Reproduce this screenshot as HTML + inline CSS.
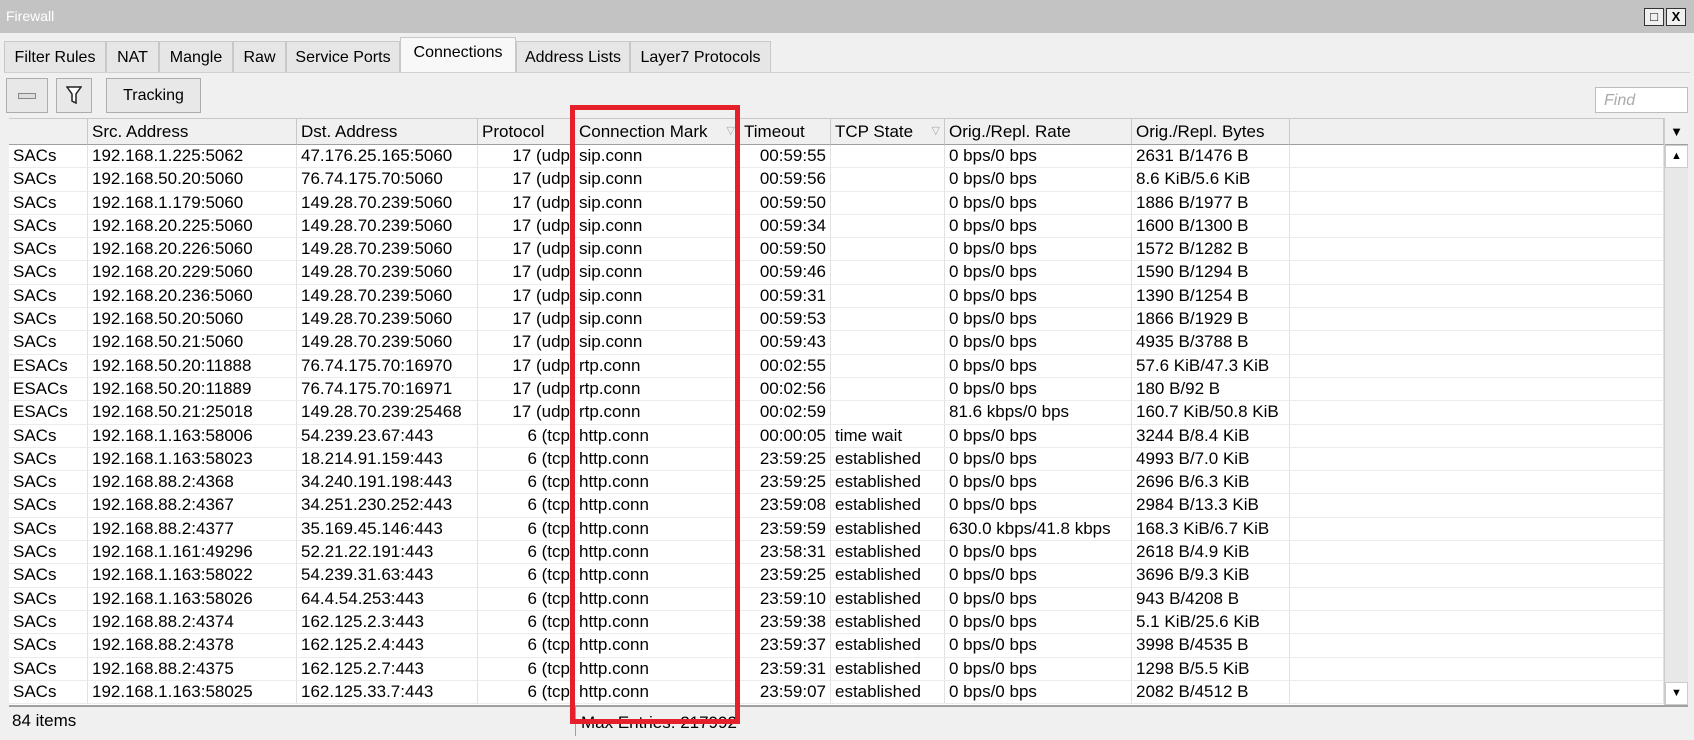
<!DOCTYPE html>
<html><head><meta charset="utf-8"><style>
*{box-sizing:border-box;margin:0;padding:0}
body{width:1694px;height:740px;background:#f0f0f0;font-family:"Liberation Sans",Arial,sans-serif;font-size:15px;color:#000;position:relative;overflow:hidden}
.title{position:absolute;left:0;top:0;width:1694px;height:33px;background:#c3c3c3;color:#fff;font-size:14px;padding:8px 6px}
.wb{position:absolute;top:8px;width:20px;height:18px;border:1px solid #333;background:#f0f0f0;font-size:13px;font-weight:bold;text-align:center;line-height:15px}
.tab{position:absolute;top:41px;height:32px;border:1px solid #c8c8c8;background:#e6e6e6;padding-top:7px;text-align:center;font-size:16px}
.tab.act{top:37px;height:36px;background:#f8f8f8;border-bottom:none;padding-top:6px}
.btn{position:absolute;top:78px;height:35px;border:1px solid #adadad;background:#e8e8e8;text-align:center;padding-top:8px;font-size:16px}
.find{position:absolute;left:1595px;top:87px;width:93px;height:26px;border:1px solid #bdbdbd;background:#fff;color:#aaa;font-style:italic;padding:4px 8px;font-size:16px}
.tbl{position:absolute;left:9px;top:118px;width:1655px;height:587px;overflow:hidden;background:#fff}
.row{display:flex;height:23.3px;overflow:hidden}
.row>div{flex:none;height:100%;border-right:1px solid #e2e2e2;border-bottom:1px solid #ececec;padding:0 4px;white-space:nowrap;overflow:hidden;font-size:17px;line-height:22px}
.row>div:nth-child(1){width:79px}.row>div:nth-child(2){width:209px}.row>div:nth-child(3){width:181px}.row>div:nth-child(4){width:97px;text-align:right}.row>div:nth-child(5){width:165px}.row>div:nth-child(6){width:91px;text-align:right}.row>div:nth-child(7){width:114px}.row>div:nth-child(8){width:187px}.row>div:nth-child(9){width:158px}.row>div:nth-child(10){width:374px}
.row.h{height:27px}
.row.h>div{background:#f0f0f0;border-right:1px solid #c8c8c8;border-bottom:1px solid #a0a0a0;border-top:1px solid #c8c8c8;line-height:25px;text-align:left}
.sb{position:absolute;left:1664px;top:118px;width:24px;height:587px;background:#e8e8e8;border-left:1px solid #ccc}
.status{position:absolute;left:9px;top:705px;width:1679px;height:29px;border-top:2px solid #a0a0a0;background:#f0f0f0;font-size:17px}
.red{position:absolute;left:570px;top:105px;width:170px;height:619px;border:5px solid #e5202a}
</style></head><body>
<div class="title">Firewall</div>
<div class="wb" style="left:1644px">&#9633;</div><div class="wb" style="left:1666px">X</div>
<div class="tab" style="left:4px;width:102px">Filter Rules</div>
<div class="tab" style="left:106px;width:53px">NAT</div>
<div class="tab" style="left:159px;width:74px">Mangle</div>
<div class="tab" style="left:233px;width:53px">Raw</div>
<div class="tab" style="left:286px;width:114px">Service Ports</div>
<div class="tab act" style="left:400px;width:116px">Connections</div>
<div class="tab" style="left:516px;width:114px">Address Lists</div>
<div class="tab" style="left:630px;width:141px">Layer7 Protocols</div>
<div style="position:absolute;left:4px;top:72px;width:1686px;height:1px;background:#d0d0d0"></div>
<div class="btn" style="left:6px;width:42px"><div style="width:18px;height:6px;border:1px solid #888;margin:6px auto 0;background:#ddd"></div></div>
<div class="btn" style="left:56px;width:36px;padding-top:6px"><svg width="16" height="20" viewBox="0 0 16 20"><path d="M1 2H15L10 9V18L6 16V9Z" fill="#fff" stroke="#222" stroke-width="1.5"/></svg></div>
<div class="btn" style="left:106px;width:95px">Tracking</div>
<div class="find">Find</div>
<div class="tbl">
<div class="row h"><div></div><div>Src. Address</div><div>Dst. Address</div><div>Protocol</div><div>Connection Mark <span style="float:right;color:#aaa;font-size:11px">&#9661;</span></div><div>Timeout</div><div>TCP State <span style="float:right;color:#aaa;font-size:11px">&#9661;</span></div><div>Orig./Repl. Rate</div><div>Orig./Repl. Bytes</div><div></div></div>
<div class="row"><div>SACs</div><div>192.168.1.225:5062</div><div>47.176.25.165:5060</div><div>17 (udp</div><div>sip.conn</div><div>00:59:55</div><div></div><div>0 bps/0 bps</div><div>2631 B/1476 B</div><div></div></div>
<div class="row"><div>SACs</div><div>192.168.50.20:5060</div><div>76.74.175.70:5060</div><div>17 (udp</div><div>sip.conn</div><div>00:59:56</div><div></div><div>0 bps/0 bps</div><div>8.6 KiB/5.6 KiB</div><div></div></div>
<div class="row"><div>SACs</div><div>192.168.1.179:5060</div><div>149.28.70.239:5060</div><div>17 (udp</div><div>sip.conn</div><div>00:59:50</div><div></div><div>0 bps/0 bps</div><div>1886 B/1977 B</div><div></div></div>
<div class="row"><div>SACs</div><div>192.168.20.225:5060</div><div>149.28.70.239:5060</div><div>17 (udp</div><div>sip.conn</div><div>00:59:34</div><div></div><div>0 bps/0 bps</div><div>1600 B/1300 B</div><div></div></div>
<div class="row"><div>SACs</div><div>192.168.20.226:5060</div><div>149.28.70.239:5060</div><div>17 (udp</div><div>sip.conn</div><div>00:59:50</div><div></div><div>0 bps/0 bps</div><div>1572 B/1282 B</div><div></div></div>
<div class="row"><div>SACs</div><div>192.168.20.229:5060</div><div>149.28.70.239:5060</div><div>17 (udp</div><div>sip.conn</div><div>00:59:46</div><div></div><div>0 bps/0 bps</div><div>1590 B/1294 B</div><div></div></div>
<div class="row"><div>SACs</div><div>192.168.20.236:5060</div><div>149.28.70.239:5060</div><div>17 (udp</div><div>sip.conn</div><div>00:59:31</div><div></div><div>0 bps/0 bps</div><div>1390 B/1254 B</div><div></div></div>
<div class="row"><div>SACs</div><div>192.168.50.20:5060</div><div>149.28.70.239:5060</div><div>17 (udp</div><div>sip.conn</div><div>00:59:53</div><div></div><div>0 bps/0 bps</div><div>1866 B/1929 B</div><div></div></div>
<div class="row"><div>SACs</div><div>192.168.50.21:5060</div><div>149.28.70.239:5060</div><div>17 (udp</div><div>sip.conn</div><div>00:59:43</div><div></div><div>0 bps/0 bps</div><div>4935 B/3788 B</div><div></div></div>
<div class="row"><div>ESACs</div><div>192.168.50.20:11888</div><div>76.74.175.70:16970</div><div>17 (udp</div><div>rtp.conn</div><div>00:02:55</div><div></div><div>0 bps/0 bps</div><div>57.6 KiB/47.3 KiB</div><div></div></div>
<div class="row"><div>ESACs</div><div>192.168.50.20:11889</div><div>76.74.175.70:16971</div><div>17 (udp</div><div>rtp.conn</div><div>00:02:56</div><div></div><div>0 bps/0 bps</div><div>180 B/92 B</div><div></div></div>
<div class="row"><div>ESACs</div><div>192.168.50.21:25018</div><div>149.28.70.239:25468</div><div>17 (udp</div><div>rtp.conn</div><div>00:02:59</div><div></div><div>81.6 kbps/0 bps</div><div>160.7 KiB/50.8 KiB</div><div></div></div>
<div class="row"><div>SACs</div><div>192.168.1.163:58006</div><div>54.239.23.67:443</div><div>6 (tcp</div><div>http.conn</div><div>00:00:05</div><div>time wait</div><div>0 bps/0 bps</div><div>3244 B/8.4 KiB</div><div></div></div>
<div class="row"><div>SACs</div><div>192.168.1.163:58023</div><div>18.214.91.159:443</div><div>6 (tcp</div><div>http.conn</div><div>23:59:25</div><div>established</div><div>0 bps/0 bps</div><div>4993 B/7.0 KiB</div><div></div></div>
<div class="row"><div>SACs</div><div>192.168.88.2:4368</div><div>34.240.191.198:443</div><div>6 (tcp</div><div>http.conn</div><div>23:59:25</div><div>established</div><div>0 bps/0 bps</div><div>2696 B/6.3 KiB</div><div></div></div>
<div class="row"><div>SACs</div><div>192.168.88.2:4367</div><div>34.251.230.252:443</div><div>6 (tcp</div><div>http.conn</div><div>23:59:08</div><div>established</div><div>0 bps/0 bps</div><div>2984 B/13.3 KiB</div><div></div></div>
<div class="row"><div>SACs</div><div>192.168.88.2:4377</div><div>35.169.45.146:443</div><div>6 (tcp</div><div>http.conn</div><div>23:59:59</div><div>established</div><div>630.0 kbps/41.8 kbps</div><div>168.3 KiB/6.7 KiB</div><div></div></div>
<div class="row"><div>SACs</div><div>192.168.1.161:49296</div><div>52.21.22.191:443</div><div>6 (tcp</div><div>http.conn</div><div>23:58:31</div><div>established</div><div>0 bps/0 bps</div><div>2618 B/4.9 KiB</div><div></div></div>
<div class="row"><div>SACs</div><div>192.168.1.163:58022</div><div>54.239.31.63:443</div><div>6 (tcp</div><div>http.conn</div><div>23:59:25</div><div>established</div><div>0 bps/0 bps</div><div>3696 B/9.3 KiB</div><div></div></div>
<div class="row"><div>SACs</div><div>192.168.1.163:58026</div><div>64.4.54.253:443</div><div>6 (tcp</div><div>http.conn</div><div>23:59:10</div><div>established</div><div>0 bps/0 bps</div><div>943 B/4208 B</div><div></div></div>
<div class="row"><div>SACs</div><div>192.168.88.2:4374</div><div>162.125.2.3:443</div><div>6 (tcp</div><div>http.conn</div><div>23:59:38</div><div>established</div><div>0 bps/0 bps</div><div>5.1 KiB/25.6 KiB</div><div></div></div>
<div class="row"><div>SACs</div><div>192.168.88.2:4378</div><div>162.125.2.4:443</div><div>6 (tcp</div><div>http.conn</div><div>23:59:37</div><div>established</div><div>0 bps/0 bps</div><div>3998 B/4535 B</div><div></div></div>
<div class="row"><div>SACs</div><div>192.168.88.2:4375</div><div>162.125.2.7:443</div><div>6 (tcp</div><div>http.conn</div><div>23:59:31</div><div>established</div><div>0 bps/0 bps</div><div>1298 B/5.5 KiB</div><div></div></div>
<div class="row"><div>SACs</div><div>192.168.1.163:58025</div><div>162.125.33.7:443</div><div>6 (tcp</div><div>http.conn</div><div>23:59:07</div><div>established</div><div>0 bps/0 bps</div><div>2082 B/4512 B</div><div></div></div>
</div>
<div class="sb">
<div style="height:27px;background:#f0f0f0;border-bottom:1px solid #a0a0a0;text-align:center;font-size:13px;line-height:27px">&#9660;</div>
<div style="height:23px;background:#fff;border:1px solid #ccc;text-align:center;font-size:11px;line-height:21px">&#9650;</div>
<div style="position:absolute;left:0;bottom:0;width:23px;height:23px;background:#fff;border:1px solid #ccc;text-align:center;font-size:11px;line-height:21px">&#9660;</div>
</div>
<div class="status"><span style="position:absolute;left:3px;top:4px">84 items</span><div style="position:absolute;left:566px;top:0;width:1px;height:29px;background:#a0a0a0"></div><span style="position:absolute;left:572px;top:6px">Max Entries: 217992</span></div>
<div class="red"></div>
</body></html>
